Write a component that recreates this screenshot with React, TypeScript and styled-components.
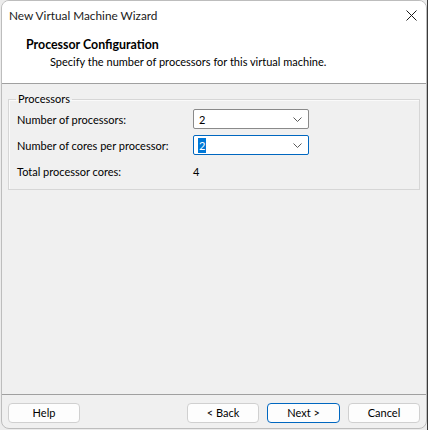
import React from "react";
import styled, { createGlobalStyle } from "styled-components";

const FONT = `"Lato", "Segoe UI", sans-serif`;

const Global = createGlobalStyle`
  html, body { margin: 0; padding: 0; }
  body {
    width: 428px;
    height: 430px;
    overflow: hidden;
    background: linear-gradient(to right, #ececec 0, #ececec 427px, #3a3a3a 427px);
    font-family: ${FONT};
    font-size: 11px;
    color: #000;
  }
`;

const Window = styled.div`
  box-sizing: border-box;
  margin-left: 1px;
  width: 426px;
  height: 429px;
  border: 1px solid #bdbdbd;
  border-radius: 8px;
  overflow: hidden;
  background: #f0f0f0;
  display: flex;
  flex-direction: column;
`;

const TopArea = styled.div`
  background: #fff;
  border-bottom: 1px solid #a0a0a0;
  height: 83px;
  box-sizing: border-box;
  display: flex;
  flex-direction: column;
`;

const TitleBar = styled.div`
  height: 31px;
  display: flex;
  align-items: center;
  justify-content: space-between;
  padding: 0 9px 2px 7px;
  box-sizing: border-box;
`;

const Title = styled.span`
  font-size: 11.8px;
  color: #1a1a1a;
  white-space: nowrap;
`;

const CloseIcon = styled.svg`
  width: 11px;
  height: 11px;
`;

const Header = styled.div`
  padding: 5px 0 0 24px;
  display: flex;
  flex-direction: column;
  gap: 2px;
`;

const HeaderTitle = styled.div`
  font-weight: bold;
  font-size: 12.4px;
  line-height: 15px;
  white-space: nowrap;
`;

const HeaderSub = styled.div`
  padding-left: 24px;
  font-size: 11px;
  line-height: 15px;
  white-space: nowrap;
`;

const Body = styled.div`
  flex: 1;
  padding: 8px 6px 0 6px;
  display: flex;
  flex-direction: column;
`;

const Group = styled.fieldset`
  margin: 0;
  padding: 3px 8px 10px 8px;
  border: 1px solid #d6d6d6;
  box-shadow: inset 1px 1px 0 #fafafa;
  height: 98px;
  box-sizing: border-box;
  display: flex;
  flex-direction: column;
  gap: 6px;
`;

const Legend = styled.legend`
  padding: 0 2px;
  margin-left: -1px;
  font-size: 11px;
  line-height: 14px;
`;

const Row = styled.div`
  display: grid;
  grid-template-columns: 176px 116px;
  align-items: center;
  height: 20px;
`;

const Label = styled.span`
  font-size: 11px;
  white-space: nowrap;
`;

const Combo = styled.div<{ $focused?: boolean }>`
  box-sizing: border-box;
  height: 20px;
  background: #fff;
  border: 1px solid ${(p) => (p.$focused ? "#0067c0" : "#8a8a8a")};
  border-radius: 2px;
  display: flex;
  align-items: center;
  justify-content: space-between;
  padding: 0 6px 0 4px;
`;

const ComboValue = styled.span<{ $selected?: boolean }>`
  font-size: 11px;
  line-height: 15px;
  padding: 0 1px;
  background: ${(p) => (p.$selected ? "#0078d7" : "transparent")};
  color: ${(p) => (p.$selected ? "#fff" : "#000")};
`;

const Chevron = styled.svg`
  width: 9px;
  height: 5px;
`;

const Value = styled.span`
  font-size: 11px;
`;

const Spacer = styled.div`
  flex: 1;
`;

const Footer = styled.div`
  border-top: 1px solid #a0a0a0;
  margin: 0 -6px;
  height: 34px;
  box-sizing: border-box;
  padding: 8px 6px 0 6px;
  display: flex;
  gap: 8px;
`;

const Button = styled.button<{ $default?: boolean; $w?: number }>`
  box-sizing: border-box;
  width: ${(p) => p.$w ?? 72}px;
  height: 20px;
  background: #fdfdfd;
  border: 1px solid ${(p) => (p.$default ? "#0067c0" : "#d0d0d0")};
  border-radius: 4px;
  font-family: ${FONT};
  font-size: 11px;
  color: #000;
  padding: 0;
  line-height: 16px;
`;

const Gap = styled.div`
  flex: 1;
`;

const ChevronIcon = () => (
  <Chevron viewBox="0 0 9 5">
    <path d="M0.5 0.5 L4.5 4.5 L8.5 0.5" fill="none" stroke="#5a5a5a" strokeWidth="1" />
  </Chevron>
);

export default function App() {
  return (
    <>
      <Global />
      <Window>
        <TopArea>
          <TitleBar>
            <Title>New Virtual Machine Wizard</Title>
            <CloseIcon viewBox="0 0 11 11">
              <path d="M0.5 0.5 L10.5 10.5 M10.5 0.5 L0.5 10.5" stroke="#1a1a1a" strokeWidth="1" />
            </CloseIcon>
          </TitleBar>
          <Header>
            <HeaderTitle>Processor Configuration</HeaderTitle>
            <HeaderSub>Specify the number of processors for this virtual machine.</HeaderSub>
          </Header>
        </TopArea>
        <Body>
          <Group>
            <Legend>Processors</Legend>
            <Row>
              <Label>Number of processors:</Label>
              <Combo>
                <ComboValue>2</ComboValue>
                <ChevronIcon />
              </Combo>
            </Row>
            <Row>
              <Label>Number of cores per processor:</Label>
              <Combo $focused>
                <ComboValue $selected>2</ComboValue>
                <ChevronIcon />
              </Combo>
            </Row>
            <Row>
              <Label>Total processor cores:</Label>
              <Value>4</Value>
            </Row>
          </Group>
          <Spacer />
          <Footer>
            <Button>Help</Button>
            <Gap />
            <Button $w={72}>&lt; Back</Button>
            <Button $default $w={73}>Next &gt;</Button>
            <Button>Cancel</Button>
          </Footer>
        </Body>
      </Window>
    </>
  );
}
